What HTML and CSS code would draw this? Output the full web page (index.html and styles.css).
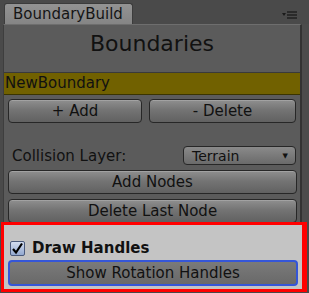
FILE: index.html
```html
<!DOCTYPE html>
<html lang="en">
<head>
    <meta charset="UTF-8">
    <title>BoundaryBuild</title>
    <link rel="stylesheet" href="styles.css">
</head>
<body>
    <div class="window">
        <div class="tabbar">
            <div class="tab">BoundaryBuild</div>
            <svg class="menu" width="16" height="9" viewBox="0 0 16 9">
                <path d="M0 2 L4 2 L2 5 Z" fill="#1a1a1a"/>
                <rect x="5" y="0" width="10" height="2" fill="#2a2a2a"/>
                <rect x="5" y="3" width="10" height="2" fill="#2a2a2a"/>
                <rect x="5" y="6" width="10" height="2" fill="#2a2a2a"/>
            </svg>
        </div>

        <div class="row">
            <div class="panel">
                <h1 class="title">Boundaries</h1>
                <div class="name-field">NewBoundary</div>

                <div class="btn-row">
                    <button class="btn">+ Add</button>
                    <button class="btn">- Delete</button>
                </div>

                <div class="layer-row">
                    <span class="label">Collision Layer:</span>
                    <div class="dropdown">
                        <span>Terrain</span>
                        <span class="arrow">&#9660;</span>
                    </div>
                </div>

                <button class="btn wide">Add Nodes</button>
                <button class="btn wide">Delete Last Node</button>
            </div>
            <div class="side"></div>
        </div>

        <div class="highlight">
            <label class="check-row">
                <span class="checkbox">
                    <svg width="13" height="13" viewBox="0 0 13 13">
                        <path d="M2 7 L5 10.5 L11 1.5" fill="none" stroke="#000" stroke-width="2.2"/>
                    </svg>
                </span>
                <span class="check-label">Draw Handles</span>
            </label>
            <button class="btn blue">Show Rotation Handles</button>
        </div>
    </div>
</body>
</html>
```

FILE: styles.css
```css
* {
    box-sizing: border-box;
    margin: 0;
    padding: 0;
}
html, body {
    height: 100%;
    overflow: hidden;
    background-color: #4a4a4a;
    font-family: "DejaVu Sans", sans-serif;
    font-size: 15px;
    color: #111;
}
.window {
    display: flex;
    flex-direction: column;
    width: 309px;
}
.tabbar {
    display: flex;
    align-items: flex-end;
    height: 24px;
    padding-left: 4px;
}
.tab {
    width: 129px;
    height: 21px;
    padding-left: 8px;
    line-height: 20px;
    background: linear-gradient(#939393, #858585);
    border: 1px solid #3c3c3c;
    border-bottom: none;
    border-radius: 3px 3px 0 0;
    color: #151515;
}
.menu {
    margin-left: auto;
    margin-right: 11px;
    margin-bottom: 4px;
}
.row {
    display: flex;
    height: 198px;
}
.panel {
    margin-left: 3px;
    width: 299px;
    background-color: #5b5b5b;
    border-top: 1px solid #6e6e6e;
    border-left: 1px solid #3e3e3e;
    border-right: 2px solid #333;
}
.side {
    flex: 1;
    background-color: #4c4c4c;
}
.title {
    height: 48px;
    padding-top: 6px;
    line-height: 26px;
    text-align: center;
    font-size: 22px;
    font-weight: normal;
    color: #111;
    border-bottom: 1px solid #3a3a3a;
}
.name-field {
    height: 22px;
    line-height: 21px;
    padding-left: 1px;
    background-color: #716100;
    border-bottom: 1px solid #3a3400;
}
.btn-row {
    display: flex;
    gap: 7px;
    padding: 4px 4px 0 4px;
}
.btn {
    display: block;
    height: 24px;
    font-family: "DejaVu Sans", sans-serif;
    font-size: 15px;
    color: #111;
    background: linear-gradient(#8f8f8f, #747474 45%, #616161);
    border: 1px solid #272727;
    border-radius: 4px;
    box-shadow: inset 0 1px 0 rgba(255, 255, 255, 0.18);
}
.btn-row .btn:first-child {
    width: 134px;
}
.btn-row .btn:last-child {
    flex: 1;
}
.layer-row {
    display: flex;
    align-items: center;
    justify-content: space-between;
    padding: 0 4px 0 8px;
    margin-top: 23px;
    height: 19px;
}
.dropdown {
    display: flex;
    align-items: center;
    justify-content: space-between;
    width: 113px;
    height: 19px;
    padding: 0 7px 0 8px;
    font-size: 14px;
    background: linear-gradient(#8a8a8a, #6a6a6a);
    border: 1px solid #272727;
    border-radius: 4px;
}
.arrow {
    font-size: 7px;
}
.wide {
    width: 289px;
    margin-left: 4px;
}
.layer-row + .wide {
    margin-top: 5px;
}
.wide + .wide {
    margin-top: 5px;
    height: 24px;
}
.highlight {
    margin-left: 1px;
    width: 306px;
    height: 70px;
    padding: 15px 7px 0 5px;
    background-color: #c4c4c4;
    border: 3px solid #ff0000;
    border-right-width: 5px;
}
.check-row {
    display: flex;
    align-items: center;
    gap: 7px;
    height: 16px;
    padding-left: 1px;
}
.checkbox {
    display: flex;
    align-items: center;
    justify-content: center;
    width: 15px;
    height: 15px;
    background: linear-gradient(#d3ddf0, #93a9d0);
    border: 1px solid #4a5a7c;
    border-radius: 2px;
}
.check-label {
    font-weight: bold;
}
.blue {
    width: 290px;
    height: 26px;
    margin-top: 4px;
    margin-left: -1px;
    background: linear-gradient(#7a7a7a, #696969);
    border: 2px solid #3556d8;
    box-shadow: none;
}
```
